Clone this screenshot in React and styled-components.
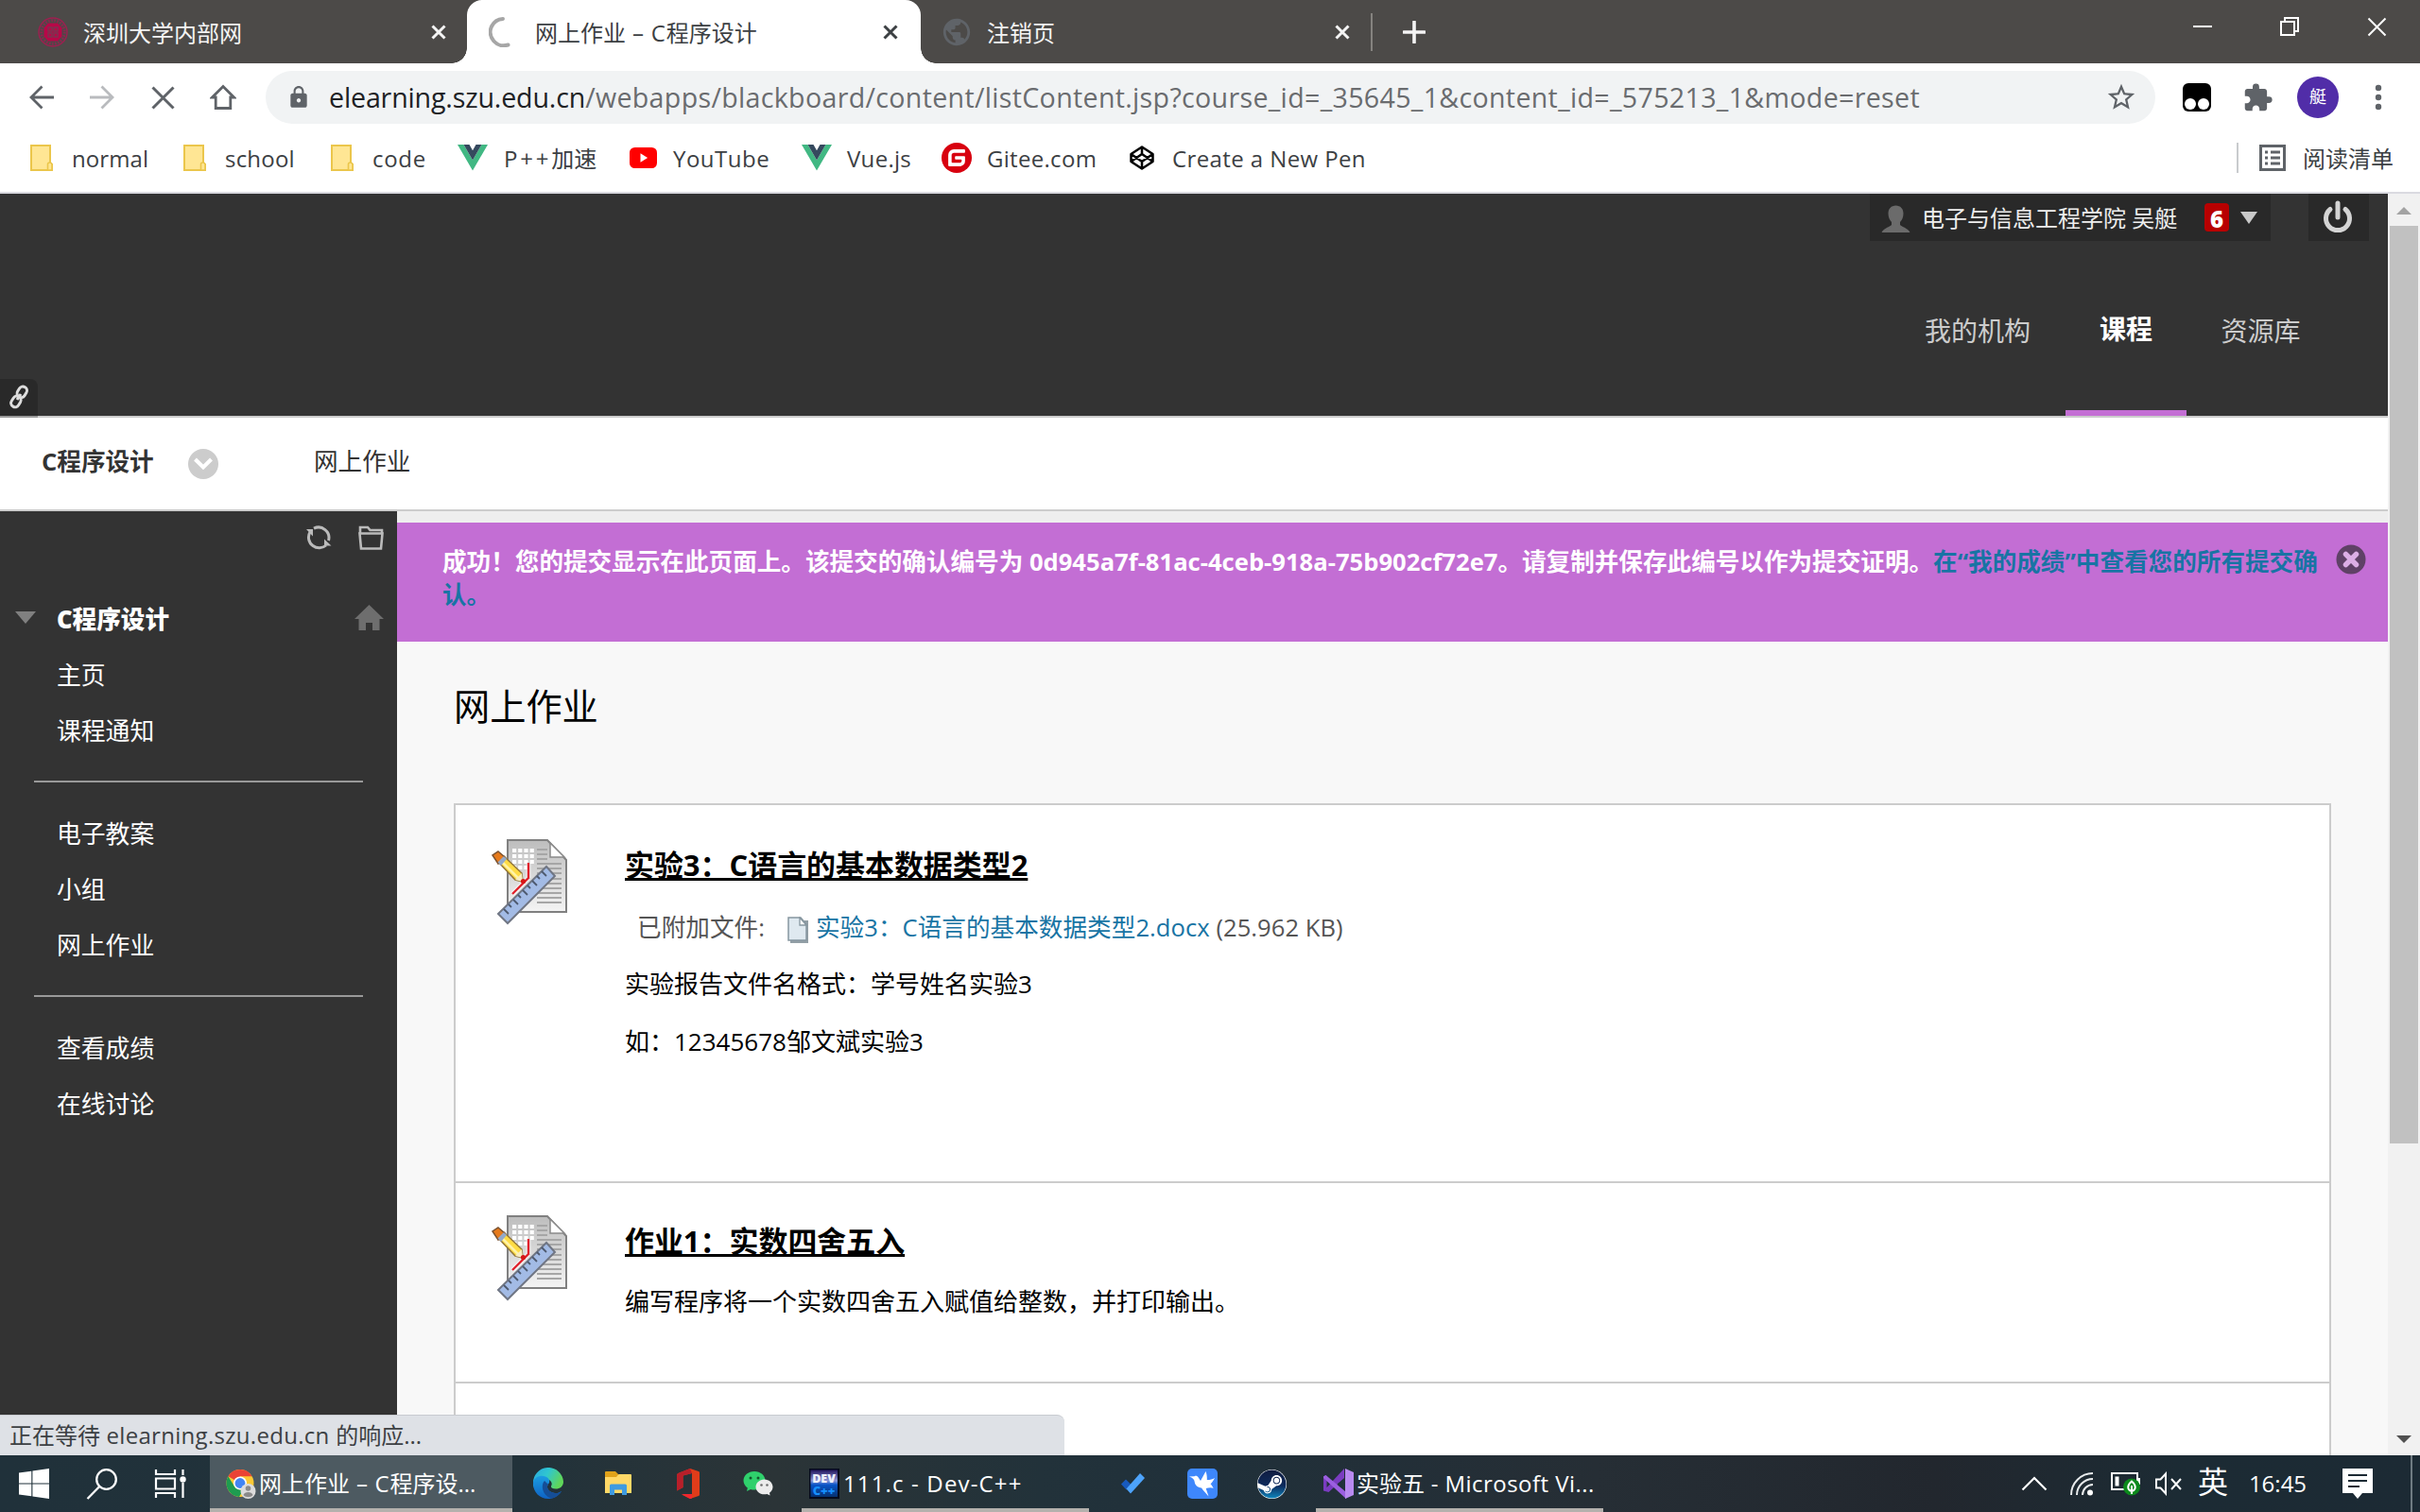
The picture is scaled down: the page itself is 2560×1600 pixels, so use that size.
import React from 'react';
import styled, { createGlobalStyle, css } from 'styled-components';
import { MdExtension, MdStarOutline, MdLock, MdPublic } from 'react-icons/md';
import { FaSteam } from 'react-icons/fa';

const GlobalStyle = createGlobalStyle`
  * { box-sizing: border-box; }
  body {
    margin: 0;
    overflow: hidden;
    font-family: "Open Sans", "Noto Sans CJK SC", sans-serif;
    font-size: 24px;
    color: #000;
  }
  svg { display: block; flex: none; }
`;

const Screen = styled.div`
  width: 2560px;
  height: 1600px;
  display: flex;
  flex-direction: column;
  overflow: hidden;
  background: #fff;
`;

const Latin = styled.span`
  letter-spacing: ${(p) => p.$track || 0}px;
  white-space: pre;
`;

/* ---------- tab strip ---------- */

const TabStrip = styled.div`
  height: 67px;
  flex: none;
  display: flex;
  background: #4c4a48;
`;

const Tab = styled.div`
  position: relative;
  width: ${(p) => p.$width}px;
  height: 67px;
  padding: 0 ${(p) => p.$padRight}px 0 ${(p) => p.$padLeft}px;
  display: flex;
  align-items: center;
  color: #f4f4f4;
  ${(p) =>
    p.$active &&
    css`
      background: #fff;
      color: #3c4043;
      border-radius: 16px 16px 0 0;
      &::before,
      &::after {
        content: '';
        position: absolute;
        bottom: 0;
        width: 16px;
        height: 16px;
      }
      &::before {
        left: -16px;
        background: radial-gradient(circle at 0 0, transparent 15.5px, #fff 16px);
      }
      &::after {
        right: -16px;
        background: radial-gradient(circle at 100% 0, transparent 15.5px, #fff 16px);
      }
    `}
`;

const TabTitle = styled.span`
  flex: 1;
  margin-left: ${(p) => p.$gap}px;
  padding-top: 2px;
  line-height: 34px;
  white-space: nowrap;
`;

const TabDivider = styled.i`
  width: 2px;
  height: 40px;
  margin: 14px 0 0 16px;
  background: #85837f;
`;

const NewTab = styled.div`
  width: 87px;
  height: 67px;
  display: flex;
  align-items: center;
  justify-content: center;
`;

const WindowControls = styled.div`
  margin-left: auto;
  height: 56px;
  display: flex;
`;

const WindowButton = styled.div`
  width: 92px;
  display: flex;
  align-items: center;
  justify-content: center;
`;

/* ---------- toolbar ---------- */

const Toolbar = styled.div`
  height: 72px;
  flex: none;
  display: flex;
  align-items: center;
  padding-left: 12px;
  color: #5f6368;
`;

const NavButton = styled.div`
  width: 64px;
  display: flex;
  justify-content: center;
`;

const Omnibox = styled.div`
  width: 1999px;
  height: 56px;
  margin: 0 12px 0 13px;
  padding: 0 19px 0 22px;
  display: flex;
  align-items: center;
  border-radius: 28px;
  background: #f1f3f4;
`;

const Url = styled.div`
  flex: 1;
  margin-left: 19px;
  font-size: 28.6px;
  line-height: 40px;
  white-space: nowrap;
  color: #6a6c6f;
`;

const UrlHost = styled.span`
  color: #202124;
  letter-spacing: -0.15px;
`;

const UrlPath = styled.span`
  letter-spacing: 0.32px;
`;

const Extension = styled.div`
  width: 64px;
  display: flex;
  justify-content: center;
`;

const Avatar = styled.div`
  width: 44px;
  height: 44px;
  border-radius: 50%;
  background: #512da8;
  color: #fff;
  font-size: 18px;
  line-height: 43px;
  text-align: center;
`;

/* ---------- bookmarks ---------- */

const BookmarksBar = styled.div`
  height: 66px;
  flex: none;
  display: flex;
  align-items: flex-start;
  padding: 5px 0 0 32px;
  border-bottom: 2px solid #dadae0;
  color: #3c4043;
`;

const Bookmark = styled.div`
  width: ${(p) => p.$width}px;
  height: 46px;
  display: flex;
  align-items: center;
  white-space: nowrap;
`;

const BookmarkLabel = styled.span`
  margin-left: ${(p) => p.$gap || 16}px;
  padding-top: 2px;
  line-height: 34px;
`;

const ReadingList = styled.div`
  height: 46px;
  margin-left: auto;
  margin-right: 28px;
  display: flex;
  align-items: center;
  &::before {
    content: '';
    width: 2px;
    height: 32px;
    margin-right: 22px;
    background: #c9cbce;
  }
`;

/* ---------- page viewport ---------- */

const Viewport = styled.div`
  position: relative;
  height: 1335px;
  flex: none;
  display: flex;
  overflow: hidden;
`;

const Page = styled.div`
  width: 2526px;
  height: 1335px;
  display: flex;
  flex-direction: column;
  font-size: 25.6px;
`;

const Header = styled.header`
  position: relative;
  height: 235px;
  flex: none;
  display: flex;
  flex-direction: column;
  justify-content: space-between;
  background: #333;
`;

const UserBar = styled.div`
  height: 50px;
  display: flex;
  justify-content: flex-end;
  padding-right: 20px;
`;

const UserMenu = styled.div`
  width: 424px;
  height: 50px;
  padding-left: 12px;
  display: flex;
  align-items: center;
  background: #292929;
  color: #eee;
  font-size: 24px;
`;

const UserName = styled.span`
  width: 287px;
  margin-left: 12px;
  padding-top: 1px;
  line-height: 34px;
  white-space: nowrap;
`;

const CountBadge = styled.span`
  width: 26px;
  height: 30px;
  margin-right: 12px;
  margin-left: 12px;
  border-radius: 4px;
  background: #b80000;
  color: #fff;
  font-size: 24px;
  font-weight: 800;
  line-height: 34px;
  text-align: center;
`;

const Power = styled.div`
  width: 64px;
  height: 50px;
  margin-left: 40px;
  padding: 0 2px 2px 0;
  display: flex;
  align-items: center;
  justify-content: center;
  background: #292929;
`;

const MainNav = styled.nav`
  height: 185px;
  display: flex;
  justify-content: flex-end;
  padding-right: 56px;
`;

const NavTab = styled.div`
  width: ${(p) => p.$width}px;
  height: 185px;
  padding-top: ${(p) => (p.$active ? 73 : 75)}px;
  border-bottom: 6px solid ${(p) => (p.$active ? '#c36ed4' : 'transparent')};
  color: ${(p) => (p.$active ? '#fff' : '#ccc')};
  font-size: 28px;
  font-weight: ${(p) => (p.$active ? 700 : 400)};
  line-height: 40px;
  text-align: center;
`;

const LinkBadge = styled.div`
  position: absolute;
  left: 0;
  top: 196px;
  width: 40px;
  height: 41px;
  padding-bottom: 3px;
  display: flex;
  align-items: center;
  justify-content: center;
  border-radius: 0 8px 0 0;
  background: linear-gradient(#292929 39px, #999 39px);
`;

const Breadcrumbs = styled.div`
  height: 101px;
  flex: none;
  display: flex;
  align-items: flex-start;
  padding: 27px 0 0 44px;
  border-top: 2px solid #ccc;
  border-bottom: 2px solid #ccc;
  background: #fff;
  color: #333;
  line-height: 40px;
`;

const CourseCrumb = styled.strong`
  width: 155px;
  white-space: nowrap;
`;

const CrumbMenu = styled.span`
  width: 32px;
  height: 32px;
  margin: 6px 101px 0 0;
  display: flex;
  align-items: center;
  justify-content: center;
  border-radius: 50%;
  background: #ccc;
`;

const Columns = styled.div`
  flex: 1;
  display: flex;
  min-height: 0;
`;

/* ---------- course menu ---------- */

const Sidebar = styled.aside`
  width: 420px;
  flex: none;
  background: #333;
  color: #fff;
`;

const SidebarTools = styled.div`
  height: 84px;
  padding: 15px 14px 0 0;
  display: flex;
  justify-content: flex-end;
  gap: 28px;
`;

const CourseHeading = styled.div`
  height: 59px;
  padding: 0 14px 2px 16px;
  display: flex;
  align-items: center;
  font-weight: 700;
  strong { flex: 1; margin-left: 22px; }
`;

const MenuItem = styled.div`
  height: 59px;
  padding-left: 60px;
  font-size: 25.8px;
  line-height: 61px;
`;

const MenuDivider = styled.hr`
  height: 2px;
  margin: 24px 36px 24px;
  border: 0;
  background: #999;
`;

/* ---------- content ---------- */

const Content = styled.main`
  flex: 1;
  min-width: 0;
  background: #f8f8f8;
`;

const Notice = styled.div`
  height: 138px;
  padding: 24px 23px 0 48px;
  display: flex;
  align-items: flex-start;
  border-top: 12px solid #eee;
  background: #c36ed4;
  color: #fff;
  svg { margin-top: -1px; }
`;

const NoticeText = styled.p`
  flex: 1;
  margin: 0;
  font-weight: 700;
  line-height: 35px;
  white-space: nowrap;
  a { color: #1874a4; }
`;

const PageTitle = styled.h1`
  margin: 41px 0 0 60px;
  font-size: 38.2px;
  font-weight: 400;
  line-height: 54px;
`;

const Assignments = styled.ul`
  width: 1986px;
  margin: 76px 0 0 60px;
  padding: 0;
  list-style: none;
  border: 2px solid #ccc;
  background: #fff;
`;

const Assignment = styled.li`
  height: ${(p) => p.$height}px;
  padding: ${(p) => p.$top}px 0 0 34px;
  display: flex;
  align-items: flex-start;
  border-bottom: 2px solid #ccc;
`;

const AssignmentBody = styled.div`
  margin: ${(p) => p.$top || 0}px 0 0 49px;
`;

const AssignmentTitle = styled.h3`
  margin: 0;
  font-size: 30.95px;
  font-weight: 700;
  line-height: 44px;
  text-decoration: underline;
  text-decoration-thickness: 3px;
  text-underline-offset: 2px;
  text-decoration-skip-ink: none;
`;

const Attachment = styled.div`
  height: 40px;
  margin: 25px 0 0 13px;
  display: flex;
  align-items: center;
  color: #555;
  line-height: 40px;
  letter-spacing: 0.04px;
  white-space: pre;
  svg { margin: 4px 7px 0 24px; }
  a { color: #1874a4; }
`;

const Description = styled.p`
  margin: ${(p) => p.$gap}px 0 0;
  font-size: 26px;
  line-height: 40px;
  white-space: nowrap;
`;

const ScrollTrack = styled.div`
  width: 34px;
  height: 1335px;
  display: flex;
  flex-direction: column;
  align-items: center;
  background: #f1f1f1;
`;

const ScrollArrow = styled.i`
  width: 0;
  height: 0;
  border: 8px solid transparent;
  ${(p) =>
    p.$up
      ? css`margin: 14px 0 12px; border-top: 0; border-bottom: 8px solid #a3a3a3;`
      : css`margin: auto 0 13px; border-bottom: 0; border-top: 8px solid #505050;`}
`;

const ScrollThumb = styled.div`
  width: 30px;
  height: 971px;
  background: #c1c1c1;
`;

const StatusBubble = styled.div`
  position: absolute;
  left: 0;
  bottom: 0;
  width: 1126px;
  height: 43px;
  padding: 3px 0 0 10px;
  border-top: 1px solid #c8cbd0;
  border-radius: 0 8px 0 0;
  background: #dee1e6;
  color: #3c4043;
  font-size: 24px;
  line-height: 36px;
`;

/* ---------- taskbar ---------- */

const Taskbar = styled.div`
  height: 60px;
  flex: none;
  display: flex;
  color: #fff;
  background: linear-gradient(90deg, #20313a 0, #22323a 22%, #2b3437 32%, #22323a 43%, #20303a 50%, #262e35 66%, #22272e 80%, #1c2b34 90%, #1c2a34 100%);
`;

const TaskIcon = styled.div`
  width: ${(p) => p.$width || 74}px;
  height: 60px;
  display: flex;
  align-items: center;
  justify-content: center;
`;

const TaskWindow = styled.div`
  width: ${(p) => p.$width}px;
  height: 60px;
  margin: 0 9px 0 ${(p) => p.$gap}px;
  padding: 0 0 0 ${(p) => p.$pad}px;
  display: flex;
  align-items: center;
  white-space: nowrap;
  overflow: hidden;
  border-bottom: 4px solid #b4b1ad;
  background: ${(p) => (p.$active ? '#4d5a61' : 'transparent')};
  svg { margin-top: 4px; }
`;

const TaskLabel = styled.span`
  margin-left: ${(p) => p.$gap}px;
  padding-top: 4px;
  line-height: 36px;
`;

const Tray = styled.div`
  margin-left: auto;
  display: flex;
  &::after {
    content: '';
    width: 2px;
    margin: 0 8px 0 16px;
    background: #6f7b82;
  }
`;

const InputMode = styled.span`
  width: 48px;
  font-size: 32px;
  line-height: 56px;
  text-align: center;
`;

const Clock = styled.span`
  width: 89px;
  line-height: 60px;
  text-align: center;
`;

/* ---------- drawings ---------- */

const Cross = ({ size, color, weight = 3 }) => (
  <svg width={size} height={size} viewBox={`0 0 ${size} ${size}`}>
    <path d={`M1.5 1.5L${size - 1.5} ${size - 1.5}M${size - 1.5} 1.5L1.5 ${size - 1.5}`} stroke={color} strokeWidth={weight} />
  </svg>
);

const Crest = () => (
  <svg width="32" height="32" viewBox="0 0 32 32" fill="none">
    <circle cx="16" cy="16" r="15" stroke="#9e1f50" strokeWidth="1.4" />
    <circle cx="16" cy="16" r="12.3" stroke="#9e1f50" strokeWidth="3" strokeDasharray="1.6 1.5" opacity=".75" />
    <path d="M11 6.500h10l4.500 5v9l-4.500 5H11l-4.500-5v-9z" fill="#b80748" />
    <path d="M11 11h4v4h-4zM17 11h4v4h-4zM11 17h4v4h-4zM17 17h4v4h-4z" stroke="#7c3450" strokeWidth="1.4" />
  </svg>
);

const Spinner = () => (
  <svg width="32" height="32" viewBox="0 0 32 32" fill="none">
    <path d="M15 2A14.300 14.300 0 0 0 3 10A14.300 14.300 0 0 0 20.500 29.500" stroke="#a6a6a6" strokeWidth="4" strokeLinecap="round" />
  </svg>
);

const Arrow = ({ flip, color }) => (
  <svg width="26" height="26" viewBox="0 0 26 26" fill="none">
    <path
      d={flip ? 'M0 13h23M12.500 1.500L24 13 12.500 24.500' : 'M26 13H3M13.500 1.500L2 13l11.500 11.500'}
      stroke={color}
      strokeWidth="2.800"
    />
  </svg>
);

const HomeOutline = () => (
  <svg width="28" height="28" viewBox="0 0 28 28" fill="none">
    <path d="M14 2.500L2.500 14H6.200V25.500H21.800V14h3.700z" stroke="#5f6368" strokeWidth="2.800" />
  </svg>
);

const FolderMark = () => (
  <svg width="24" height="28" viewBox="0 0 24 28">
    <path d="M1 1h20v18l2 2v6H1z" fill="#ffe694" stroke="#ebc64b" strokeWidth="2" />
    <path d="M18.500 27v-6q0-2 2-2t2.500 2v6z" fill="#ffe694" stroke="#ebc64b" strokeWidth="1.600" />
  </svg>
);

const VueMark = () => (
  <svg width="32" height="28" viewBox="0 0 32 28">
    <path d="M0 0h6.500L16 16.500 25.500 0H32L16 27.500z" fill="#41b883" />
    <path d="M6.500 0h6L16 6.200 19.500 0h6L16 16.500z" fill="#35495e" />
  </svg>
);

const YouTubeMark = () => (
  <svg width="30" height="22" viewBox="0 0 30 22">
    <rect width="29" height="22" rx="5.500" fill="#f00" />
    <path d="M11.500 6.200v9.600l7.600-4.800z" fill="#fff" />
  </svg>
);

const GiteeMark = () => (
  <svg width="32" height="32" viewBox="0 0 24 24">
    <circle cx="12" cy="12" r="12" fill="#d8000f" />
    <path fill="#fff" d="M18.074 5.333c.328 0 .593.266.592.593v1.482a.594.594 0 0 1-.593.592H9.777c-.982 0-1.778.796-1.778 1.778v5.630c0 .327.266.592.593.592h5.630c.982 0 1.778-.796 1.778-1.778v-.296a.593.593 0 0 0-.592-.593h-4.150a.592.592 0 0 1-.592-.592v-1.482a.593.593 0 0 1 .593-.592h6.815c.327 0 .593.265.593.592v3.408a4 4 0 0 1-4 4H5.926a.593.593 0 0 1-.593-.593V9.778a4.444 4.444 0 0 1 4.445-4.444z" />
  </svg>
);

const CodePenMark = () => (
  <svg width="26" height="26" viewBox="0 0 26 26" fill="none" stroke="#000" strokeWidth="2.500" strokeLinejoin="round">
    <path d="M13 1.500L24.500 9v8L13 24.500 1.500 17V9zM13 1.500V9M13 17v7.500M1.500 9L13 17l11.500-8M1.500 17L13 9l11.500 8" />
  </svg>
);

const ReadingMark = () => (
  <svg width="28" height="28" viewBox="0 0 28 28" fill="none" stroke="#5f6368">
    <rect x="1.500" y="1.500" width="25" height="25" strokeWidth="3" />
    <path d="M6 8h3M6 14h3M6 20h3M12 8h10M12 14h10M12 20h10" strokeWidth="3" />
  </svg>
);

const MonkeyMark = () => (
  <svg width="30" height="30" viewBox="0 0 30 30">
    <rect width="30" height="30" rx="6" fill="#000" />
    <circle cx="8" cy="22" r="6" fill="#fff" />
    <circle cx="22" cy="22" r="6" fill="#fff" />
  </svg>
);

const Dots = () => (
  <svg width="8" height="28" viewBox="0 0 8 28" fill="#5f6368">
    <circle cx="4" cy="4" r="3.200" />
    <circle cx="4" cy="14" r="3.200" />
    <circle cx="4" cy="24" r="3.200" />
  </svg>
);

const Person = () => (
  <svg width="31" height="32" viewBox="0 0 31 32" fill="#6b6b6b">
    <path d="M15.500 3.500c5 0 8 3.500 8 8.500 0 4-1.500 7-3.500 9v3c2 2.500 8 3 10.500 8H.5C3 27 9 26.500 11 24v-3c-2-2-3.500-5-3.500-9 0-5 3-8.500 8-8.500z" />
  </svg>
);

const PowerMark = () => (
  <svg width="34" height="36" viewBox="0 0 34 36" fill="none" stroke="#d4d4d4" strokeWidth="5" strokeLinecap="round">
    <path d="M17 4v15M9 10.500a12.500 12.500 0 1 0 16 0" />
  </svg>
);

const Chain = () => (
  <svg width="22" height="26" viewBox="0 0 22 26" fill="none" stroke="#ddd" strokeWidth="3">
    <rect x="10" y="1.800" width="8.600" height="12" rx="4.200" transform="rotate(32 14.300 7.800)" />
    <rect x="3.600" y="12" width="8.600" height="12" rx="4.200" transform="rotate(32 7.900 18)" />
    <path d="M13 10l-4 6" />
  </svg>
);

const Chevron = () => (
  <svg width="20" height="14" viewBox="0 0 20 14" fill="none">
    <path d="M1.500 2l8.500 8.500L18.500 2" stroke="#fff" strokeWidth="4" />
  </svg>
);

const Refresh = () => (
  <svg width="28" height="26" viewBox="0 0 28 26" fill="none" stroke="#bbb" strokeWidth="3">
    <path d="M8 21.500A11 11 0 0 1 5 7M9 3.200A11 11 0 0 1 24.500 16M22 21A11 11 0 0 1 8 21.500" />
    <path d="M1 4h7v7.500zM27.500 21.500h-7.500v-7z" fill="#bbb" stroke="none" />
  </svg>
);

const FolderOutline = () => (
  <svg width="27" height="26" viewBox="0 0 27 26" fill="none" stroke="#bbb" strokeWidth="2.600">
    <path d="M2 7.500V2h8l2.500 3H25v2.500M1.500 8.500h24L24 24.500H3z" />
  </svg>
);

const HomeSolid = () => (
  <svg width="31" height="27" viewBox="0 0 31 27" fill="#6e6e6e">
    <path d="M15.500 0L31 15h-4.500v12H19v-8h-7v8H4.500V15H0z" />
  </svg>
);

const TriangleDown = ({ width, height, color }) => (
  <svg width={width} height={height} viewBox="0 0 10 10" preserveAspectRatio="none" fill={color}>
    <path d="M0 0h10L5 10z" />
  </svg>
);

const CloseBadge = () => (
  <svg width="32" height="32" viewBox="0 0 32 32">
    <circle cx="16" cy="16" r="15.500" fill="#5f4166" />
    <path d="M10.500 10.500l11 11M21.500 10.500l-11 11" stroke="#dcaee5" strokeWidth="5.500" strokeLinecap="round" />
  </svg>
);

const AssignmentIcon = () => (
  <svg width="96" height="96" viewBox="0 0 96 96">
    <defs>
      <linearGradient id="sheet" x1="0" y1="0" x2="0" y2="1">
        <stop offset="0" stopColor="#bdbdbd" />
        <stop offset="1" stopColor="#f4f4f4" />
      </linearGradient>
      <linearGradient id="ruler" x1="0" y1="0" x2="1" y2="1">
        <stop offset="0" stopColor="#9cbbec" />
        <stop offset="1" stopColor="#a9bbdf" />
      </linearGradient>
    </defs>
    <path d="M21 5h42l20 21v55H21z" fill="url(#sheet)" stroke="#808080" strokeWidth="2" />
    <path d="M66 8v15h15z" fill="#fff" stroke="#8a8a8a" strokeWidth="1.500" />
    <path d="M26 16h24M26 22h24M26 28h24M26 34h18" stroke="#fff" strokeWidth="4.200" strokeDasharray="4.200 2" />
    <path d="M52 15h11M52 20h11M52 25h11M52 30h26M52 35h26M52 40h26M52 46h26M52 51h26M52 56h26M52 61h26M52 66h26M52 71h26" stroke="#a6a6a6" strokeWidth="2" />
    <path d="M43 29v16M43 45L26 62" stroke="#fff" strokeWidth="5" fill="none" opacity=".6" />
    <path d="M43 29v16L26 62" stroke="#e0222c" strokeWidth="2.400" fill="none" />
    <path d="M62 33l9 10-50 50-10-10z" fill="url(#ruler)" stroke="#707684" strokeWidth="2" />
    <path d="M57 38l5 5M52 43l3 3M47 48l5 5M42 53l3 3M37 58l5 5M32 63l3 3M27 68l5 5M22 73l3 3M17 78l5 5" stroke="#4e5a70" strokeWidth="1.800" />
    <path d="M17 22L36 40l1 9-8-2-18-19z" fill="#ffdc45" stroke="#94773a" strokeWidth="1.500" />
    <path d="M15 28l17 17" stroke="#fff3a8" strokeWidth="2.500" />
    <path d="M36 40l1 9-8-2z" fill="#f7ecc4" />
    <path d="M11 17l7 6-7 7-6-9z" fill="#e67a1b" stroke="#7a5230" strokeWidth="1.500" />
    <path d="M17 22l3 3-6 7-3.500-3.500z" fill="#94a9c9" />
    <circle cx="37.500" cy="48.500" r="2.600" fill="#d61616" />
  </svg>
);

const DocumentIcon = () => (
  <svg width="23" height="28" viewBox="0 0 23 28">
    <path d="M3 4h19v24H3z" fill="#6f7f88" opacity=".75" />
    <path d="M1 1h13l6 7v17H1z" fill="#dfe9f0" stroke="#8797a0" strokeWidth="1.500" />
    <path d="M13 1v8h7z" fill="#fff" stroke="#8797a0" strokeWidth="1.300" />
  </svg>
);

const WindowsLogo = () => (
  <svg width="32" height="32" viewBox="0 0 32 32" fill="#fff">
    <path d="M0 4.500L13.300 2.700V15.400H0zM14.400 2.500L32 0V15.400H14.400zM0 16.500H13.300V29.200L0 27.400zM14.400 16.500H32V32L14.400 29.400z" />
  </svg>
);

const SearchMark = () => (
  <svg width="34" height="34" viewBox="0 0 34 34" fill="none" stroke="#fff" strokeWidth="2.300">
    <circle cx="21.500" cy="12.500" r="10.300" />
    <path d="M14.500 19.800L1.500 33" />
  </svg>
);

const TaskView = () => (
  <svg width="34" height="32" viewBox="0 0 34 32" fill="none" stroke="#fff" strokeWidth="2.200">
    <path d="M2 1v5h20V1M2 31v-5h20v5M2 10.500h20v11H2zM30.500 1v6M30.500 15v16" />
    <circle cx="30.500" cy="11.500" r="3.200" fill="#fff" stroke="none" />
  </svg>
);

const ChromeLogo = () => (
  <svg width="32" height="32" viewBox="0 0 32 32">
    <circle cx="15" cy="15.500" r="14.500" fill="#fcc934" />
    <path d="M15 15.500L2.400 8.200A14.500 14.500 0 0 1 27.600 8.200H15z" fill="#ea4335" />
    <path d="M2.400 8.200A14.500 14.500 0 0 0 14 30l6-10.500-5 3-6-3.500z" fill="#1e9c50" />
    <circle cx="15" cy="15.500" r="7" fill="#fff" />
    <circle cx="15" cy="15.500" r="5.400" fill="#4285f4" />
    <circle cx="23.500" cy="24" r="8" fill="#dcdcdc" />
    <circle cx="23.500" cy="21" r="2.800" fill="#8a8a8a" />
    <path d="M18.500 28c1-4 9-4 10 0-2 3-8 3-10 0z" fill="#8a8a8a" />
  </svg>
);

const EdgeLogo = () => (
  <svg width="34" height="34" viewBox="0 0 34 34">
    <defs>
      <linearGradient id="edgeTop" x1="0" y1="0" x2="1" y2=".4">
        <stop offset="0" stopColor="#2aa7e0" />
        <stop offset=".5" stopColor="#2fc6d0" />
        <stop offset="1" stopColor="#5fd65a" />
      </linearGradient>
      <linearGradient id="edgeBody" x1="0" y1="0" x2="0" y2="1">
        <stop offset="0" stopColor="#1b9de2" />
        <stop offset="1" stopColor="#0f62c4" />
      </linearGradient>
    </defs>
    <path d="M1 17A16 16 0 0 1 33 15c0 5-4 7.500-8 7.500-4 0-5.500-1.500-5-3 1.500-2 1-6.500-5-7C8 12 1.500 16 1 22z" fill="url(#edgeTop)" />
    <path d="M1 15C3 9 10 7.500 14 9.500c5 2 5 6 3 8-3 4 1 9 7 9.500 3 .2 5-.6 7-2C27.500 30.500 22 33 17 33 8 33 1 26 1 17z" fill="url(#edgeBody)" />
    <path d="M13 14c-4 4-3 15 7 18.700 5-.7 8.500-3.700 11-7.700-2 1.400-4 2.200-7 2-6-.5-10-5.500-7-9.500-1-.5-2.500-2-4-3.500z" fill="#154e97" />
  </svg>
);

const ExplorerLogo = () => (
  <svg width="28" height="26" viewBox="0 0 28 26">
    <path d="M0 1q0-1 1-1h10l3 3v4H0z" fill="#e0a21a" />
    <path d="M0 6h12l2.500-3H27q1 0 1 1v19H0z" fill="#ffd867" />
    <path d="M5 25V15q0-1.500 1.500-1.500h15Q23 13.500 23 15v10h-5v-5.500h-8V25z" fill="#3f9ae0" />
  </svg>
);

const OfficeLogo = () => (
  <svg width="26" height="32" viewBox="0 0 26 32">
    <path d="M15 0l9 3q1 .4 1 1.500v23q0 1-1 1.500l-9 3-9-4.500 11 1V5L7.500 7.500V20L1 23.500v-16Q1 5.500 3 4.700z" fill="#e03c1a" />
    <path d="M15 0L3 4.700Q1 5.500 1 7.500v16L7.500 20V7.500L17 5z" fill="#b81f2a" />
    <path d="M6 27l9 5 2-.5V27z" fill="#f0262f" />
  </svg>
);

const WeChatLogo = () => (
  <svg width="32" height="28" viewBox="0 0 32 28">
    <path d="M12 1c6.500 0 11.500 4.300 11.500 9.800S18.500 20.500 12 20.500c-1.500 0-2.800-.2-4-.6L4 22l.8-3.600C2.200 16.700.5 14 .5 10.800.500 5.300 5.500 1 12 1z" fill="#2fd06c" />
    <ellipse cx="8" cy="8" rx="1.500" ry="1.600" fill="#13552c" />
    <ellipse cx="16" cy="8" rx="1.500" ry="1.600" fill="#13552c" />
    <path d="M22.500 9.500c5 0 9 3.600 9 8 0 2.600-1.300 4.800-3.500 6.200l.6 2.800-3.200-1.500c-1 .2-1.900.3-2.900.3-5 0-9-3.500-9-7.800s4-8 9-8z" fill="#ececec" />
    <circle cx="19.500" cy="15.500" r="1.300" fill="#6c6c6c" />
    <circle cx="25.500" cy="15.500" r="1.300" fill="#6c6c6c" />
  </svg>
);

const DevLogo = () => (
  <svg width="32" height="32" viewBox="0 0 32 32">
    <defs>
      <linearGradient id="dev" x1="0" y1="0" x2="0" y2="1">
        <stop offset="0" stopColor="#22155c" />
        <stop offset=".4" stopColor="#8d97d8" />
        <stop offset=".55" stopColor="#0a55c8" />
        <stop offset="1" stopColor="#06306f" />
      </linearGradient>
    </defs>
    <rect width="32" height="32" fill="#060b1c" />
    <rect x="1.500" y="1.500" width="28.500" height="28.500" fill="url(#dev)" />
    <text x="15.500" y="14.500" textAnchor="middle" fontSize="12.500" fontWeight="800" fill="#eef0fa" fontFamily="Open Sans">DEV</text>
    <text x="15.500" y="27.500" textAnchor="middle" fontSize="13" fontWeight="800" fill="#1690ff" fontFamily="Open Sans">C++</text>
  </svg>
);

const TodoLogo = () => (
  <svg width="25" height="22" viewBox="0 0 25 22">
    <path d="M0 11.500l5-5 6 6-5.500 5z" fill="#185abd" />
    <path d="M5.500 16.500L20 0l5 5L10 21.500z" fill="#4da3fb" />
  </svg>
);

const BirdLogo = () => (
  <svg width="32" height="32" viewBox="0 0 32 32">
    <rect width="32" height="32" rx="5" fill="#3e87fb" />
    <path d="M2 8.500l5.500-.3c1.500-.9 3.300-.4 4.200 1.300l2.300 3.500L19.500 3c1 2.500 1.500 5.500 1.300 9 2.500.2 5.500-.5 8.200-2-1.500 3-3 5-4.500 6.200 1 1 2.200 2.600 3.200 4.600-2.500-1-5.200-.6-8 .2l2.800 8.500c-3-3.500-5.500-6-7.500-9-4-.5-7-3-7.300-6.500C7.500 11.500 5.500 9.500 2 8.500z" fill="#fff" />
  </svg>
);

const SteamRing = styled.span`
  width: 31px;
  height: 31px;
  border-radius: 50%;
  overflow: hidden;
  background: #fff;
  svg { fill: url(#steamFill); }
`;

const SteamLogo = () => (
  <SteamRing>
    <svg width="0" height="0">
      <defs>
        <linearGradient id="steamFill" x1="0" y1="0" x2="0" y2="1">
          <stop offset="0" stopColor="#101c40" />
          <stop offset=".55" stopColor="#0d2a5c" />
          <stop offset="1" stopColor="#0f86bd" />
        </linearGradient>
      </defs>
    </svg>
    <FaSteam size={31} />
  </SteamRing>
);

const VisualStudioLogo = () => (
  <svg width="32" height="32" viewBox="0 0 32 32">
    <path d="M0 8.500L2.500 7l6.500 7L22 0v10L5.500 25 0 23.500z" fill="#7a3cc0" />
    <path d="M3.500 12.500v7.500l4-4z" fill="#22313a" />
    <path d="M0 8.500L2.500 7 24 25v7L0 10z" fill="#9b5fe0" />
    <path d="M23 0l9 4v24l-9 4z" fill="#b98af0" />
    <path d="M23 10l-8 6 8 6z" fill="#22313a" />
  </svg>
);

const Wifi = () => (
  <svg width="25" height="25" viewBox="0 0 25 25" fill="none" stroke="#e8ebec" strokeWidth="2">
    <path d="M1 24A23 23 0 0 1 24 1M7 24A17 17 0 0 1 24 7M13 24A11 11 0 0 1 24 13" />
    <circle cx="21" cy="21.500" r="3" fill="#fff" stroke="none" />
  </svg>
);

const Battery = () => (
  <svg width="32" height="26" viewBox="0 0 32 26" fill="none">
    <path d="M1 2h27v17H1z" stroke="#fff" strokeWidth="2" />
    <path d="M29 7h2v7h-2zM4.500 5.500h4v10h-4z" fill="#fff" />
    <circle cx="22" cy="16.500" r="9" fill="#0c8a1c" />
    <path d="M22 10.500c5 4 5 9 0 10.500-5-1.500-5-6.500 0-10.500zM22 15v9" stroke="#fff" strokeWidth="2" />
  </svg>
);

const Muted = () => (
  <svg width="30" height="26" viewBox="0 0 30 26" fill="none" stroke="#fff" strokeWidth="2">
    <path d="M2 8.500h4.500L12 2.500v21l-5.500-6H2zM18 8l10 11M28 8L18 19" />
  </svg>
);

const ActionCenter = () => (
  <svg width="32" height="32" viewBox="0 0 32 32">
    <path d="M0 0h32v26H21l-5 6-5-6H0z" fill="#fff" />
    <path d="M6 7h20M6 13h20M6 19h12" stroke="#1c2a34" strokeWidth="2" />
  </svg>
);

/* ---------- sections ---------- */

const bookmarks = [
  { label: 'normal', width: 162, gap: 20, track: 0.1, Mark: FolderMark },
  { label: 'school', width: 156, gap: 20, track: 0.2, Mark: FolderMark },
  { label: 'code', width: 134, gap: 20, track: 0.7, Mark: FolderMark },
  { label: 'P++', cjk: '加速', width: 182, gap: 17, track: 2.8, Mark: VueMark },
  { label: 'YouTube', width: 182, gap: 16, track: 0.5, Mark: YouTubeMark },
  { label: 'Vue.js', width: 148, gap: 16, track: 0.3, Mark: VueMark },
  { label: 'Gitee.com', width: 199, gap: 16, track: 0.3, Mark: GiteeMark },
  { label: 'Create a New Pen', width: 260, gap: 19, track: 0.4, Mark: CodePenMark },
];

const menuGroups = [
  ['主页', '课程通知'],
  ['电子教案', '小组', '网上作业'],
  ['查看成绩', '在线讨论'],
];

function Browser() {
  return (
    <>
      <TabStrip>
        <Tab $width={494} $padLeft={40} $padRight={22}>
          <Crest />
          <TabTitle $gap={16}>深圳大学内部网</TabTitle>
          <Cross size={16} color="#f4f4f4" />
        </Tab>
        <Tab $active $width={480} $padLeft={23} $padRight={24}>
          <Spinner />
          <TabTitle $gap={17}>网上作业<Latin $track={0.8}> – C</Latin>程序设计</TabTitle>
          <Cross size={16} color="#3c4043" />
        </Tab>
        <Tab $width={460} $padLeft={21} $padRight={6}>
          <MdPublic size={34} color="#5f6368" />
          <TabTitle $gap={15}>注销页</TabTitle>
          <Cross size={16} color="#f4f4f4" />
        </Tab>
        <TabDivider />
        <NewTab>
          <svg width="24" height="24" viewBox="0 0 24 24">
            <path d="M12 1v22M1 12h22" stroke="#f4f4f4" strokeWidth="3.600" strokeLinecap="round" />
          </svg>
        </NewTab>
        <WindowControls>
          <WindowButton>
            <svg width="20" height="2"><path d="M0 1h20" stroke="#fff" strokeWidth="2" /></svg>
          </WindowButton>
          <WindowButton>
            <svg width="20" height="20" viewBox="0 0 20 20" fill="none" stroke="#fff" strokeWidth="2">
              <path d="M1 5h14v14H1zM5 5V1h14v14h-4" />
            </svg>
          </WindowButton>
          <WindowButton><Cross size={21} color="#fff" weight={2} /></WindowButton>
        </WindowControls>
      </TabStrip>
      <Toolbar>
        <NavButton><Arrow color="#5f6368" /></NavButton>
        <NavButton><Arrow flip color="#b9bbbe" /></NavButton>
        <NavButton><Cross size={25} color="#5f6368" /></NavButton>
        <NavButton><HomeOutline /></NavButton>
        <Omnibox>
          <MdLock size={26} color="#5f6368" />
          <Url>
            <UrlHost>elearning.szu.edu.cn</UrlHost>
            <UrlPath>/webapps/blackboard/content/listContent.jsp?course_id=_35645_1&amp;content_id=_575213_1&amp;mode=reset</UrlPath>
          </Url>
          <MdStarOutline size={34} color="#5f6368" />
        </Omnibox>
        <Extension><MonkeyMark /></Extension>
        <Extension><MdExtension size={33} color="#5f6368" /></Extension>
        <Extension><Avatar>艇</Avatar></Extension>
        <Extension><Dots /></Extension>
      </Toolbar>
      <BookmarksBar>
        {bookmarks.map(({ label, cjk, width, gap, track, Mark }) => (
          <Bookmark key={label} $width={width}>
            <Mark />
            <BookmarkLabel $gap={gap}><Latin $track={track}>{label}</Latin>{cjk}</BookmarkLabel>
          </Bookmark>
        ))}
        <ReadingList>
          <ReadingMark />
          <BookmarkLabel $gap={18}>阅读清单</BookmarkLabel>
        </ReadingList>
      </BookmarksBar>
    </>
  );
}

function PageHeader() {
  return (
    <>
      <Header>
        <UserBar>
          <UserMenu>
            <Person />
            <UserName>电子与信息工程学院 吴艇</UserName>
            <CountBadge>6</CountBadge>
            <TriangleDown width={18} height={13} color="#c9c9c9" />
          </UserMenu>
          <Power><PowerMark /></Power>
        </UserBar>
        <MainNav>
          <NavTab $width={186}>我的机构</NavTab>
          <NavTab $width={128} $active>课程</NavTab>
          <NavTab $width={157}>资源库</NavTab>
        </MainNav>
        <LinkBadge><Chain /></LinkBadge>
      </Header>
      <Breadcrumbs>
        <CourseCrumb>C程序设计</CourseCrumb>
        <CrumbMenu><Chevron /></CrumbMenu>
        <span>网上作业</span>
      </Breadcrumbs>
    </>
  );
}

function CourseMenu() {
  return (
    <Sidebar>
      <SidebarTools>
        <Refresh />
        <FolderOutline />
      </SidebarTools>
      <CourseHeading>
        <TriangleDown width={22} height={13} color="#808080" />
        <strong>C程序设计</strong>
        <HomeSolid />
      </CourseHeading>
      {menuGroups.map((group, i) => (
        <React.Fragment key={group[0]}>
          {i > 0 && <MenuDivider />}
          {group.map((item) => <MenuItem key={item}>{item}</MenuItem>)}
        </React.Fragment>
      ))}
    </Sidebar>
  );
}

function CourseContent() {
  return (
    <Content>
      <Notice>
        <NoticeText>
          成功！您的提交显示在此页面上。该提交的确认编号为 0d945a7f-81ac-4ceb-918a-75b902cf72e7。请复制并保存此编号以作为提交证明。
          <a>在“我的成绩”中查看您的所有提交确<br />认。</a>
        </NoticeText>
        <CloseBadge />
      </Notice>
      <PageTitle>网上作业</PageTitle>
      <Assignments>
        <Assignment $height={400} $top={32}>
          <AssignmentIcon />
          <AssignmentBody $top={9}>
            <AssignmentTitle>实验3：C语言的基本数据类型2</AssignmentTitle>
            <Attachment>已附加文件:<DocumentIcon /><a>实验3：C语言的基本数据类型2.docx</a> (25.962 KB)</Attachment>
            <Description $gap={19}>实验报告文件名格式：学号姓名实验3</Description>
            <Description $gap={21}>如：12345678邹文斌实验3</Description>
          </AssignmentBody>
        </Assignment>
        <Assignment $height={212} $top={30}>
          <AssignmentIcon />
          <AssignmentBody $top={9}>
            <AssignmentTitle>作业1：实数四舍五入</AssignmentTitle>
            <Description $gap={22}>编写程序将一个实数四舍五入赋值给整数，并打印输出。</Description>
          </AssignmentBody>
        </Assignment>
        <Assignment $height={212} $top={30} />
      </Assignments>
    </Content>
  );
}

function WindowsTaskbar() {
  return (
    <Taskbar>
      <TaskIcon $width={72}><WindowsLogo /></TaskIcon>
      <TaskIcon $width={72}><SearchMark /></TaskIcon>
      <TaskIcon $width={72}><TaskView /></TaskIcon>
      <TaskWindow $active $width={320} $gap={6} $pad={17}>
        <ChromeLogo />
        <TaskLabel $gap={3}>网上作业<Latin $track={0.7}> – C</Latin>程序设...</TaskLabel>
      </TaskWindow>
      <TaskIcon $width={58}><EdgeLogo /></TaskIcon>
      <TaskIcon $width={90}><ExplorerLogo /></TaskIcon>
      <TaskIcon $width={58}><OfficeLogo /></TaskIcon>
      <TaskIcon $width={90}><WeChatLogo /></TaskIcon>
      <TaskWindow $width={304} $gap={1} $pad={8}>
        <DevLogo />
        <TaskLabel $gap={4}><Latin $track={1.15}>111.c - Dev-C++</Latin></TaskLabel>
      </TaskWindow>
      <TaskIcon><TodoLogo /></TaskIcon>
      <TaskIcon><BirdLogo /></TaskIcon>
      <TaskIcon $width={72}><SteamLogo /></TaskIcon>
      <TaskWindow $width={304} $gap={11} $pad={8}>
        <VisualStudioLogo />
        <TaskLabel $gap={3}>实验五<Latin $track={0.45}> - Microsoft Vi...</Latin></TaskLabel>
      </TaskWindow>
      <Tray>
        <TaskIcon $width={50}>
          <svg width="28" height="16" viewBox="0 0 28 16" fill="none">
            <path d="M1.500 14.500L14 2l12.500 12.500" stroke="#fff" strokeWidth="2.200" />
          </svg>
        </TaskIcon>
        <TaskIcon $width={50}><Wifi /></TaskIcon>
        <TaskIcon $width={44}><Battery /></TaskIcon>
        <TaskIcon $width={46}><Muted /></TaskIcon>
        <InputMode>英</InputMode>
        <Clock>16:45</Clock>
        <TaskIcon $width={80}><ActionCenter /></TaskIcon>
      </Tray>
    </Taskbar>
  );
}

export default function App() {
  return (
    <Screen>
      <GlobalStyle />
      <Browser />
      <Viewport>
        <Page>
          <PageHeader />
          <Columns>
            <CourseMenu />
            <CourseContent />
          </Columns>
        </Page>
        <ScrollTrack>
          <ScrollArrow $up />
          <ScrollThumb />
          <ScrollArrow />
        </ScrollTrack>
        <StatusBubble>正在等待<Latin $track={0.3}> elearning.szu.edu.cn </Latin>的响应...</StatusBubble>
      </Viewport>
      <WindowsTaskbar />
    </Screen>
  );
}
